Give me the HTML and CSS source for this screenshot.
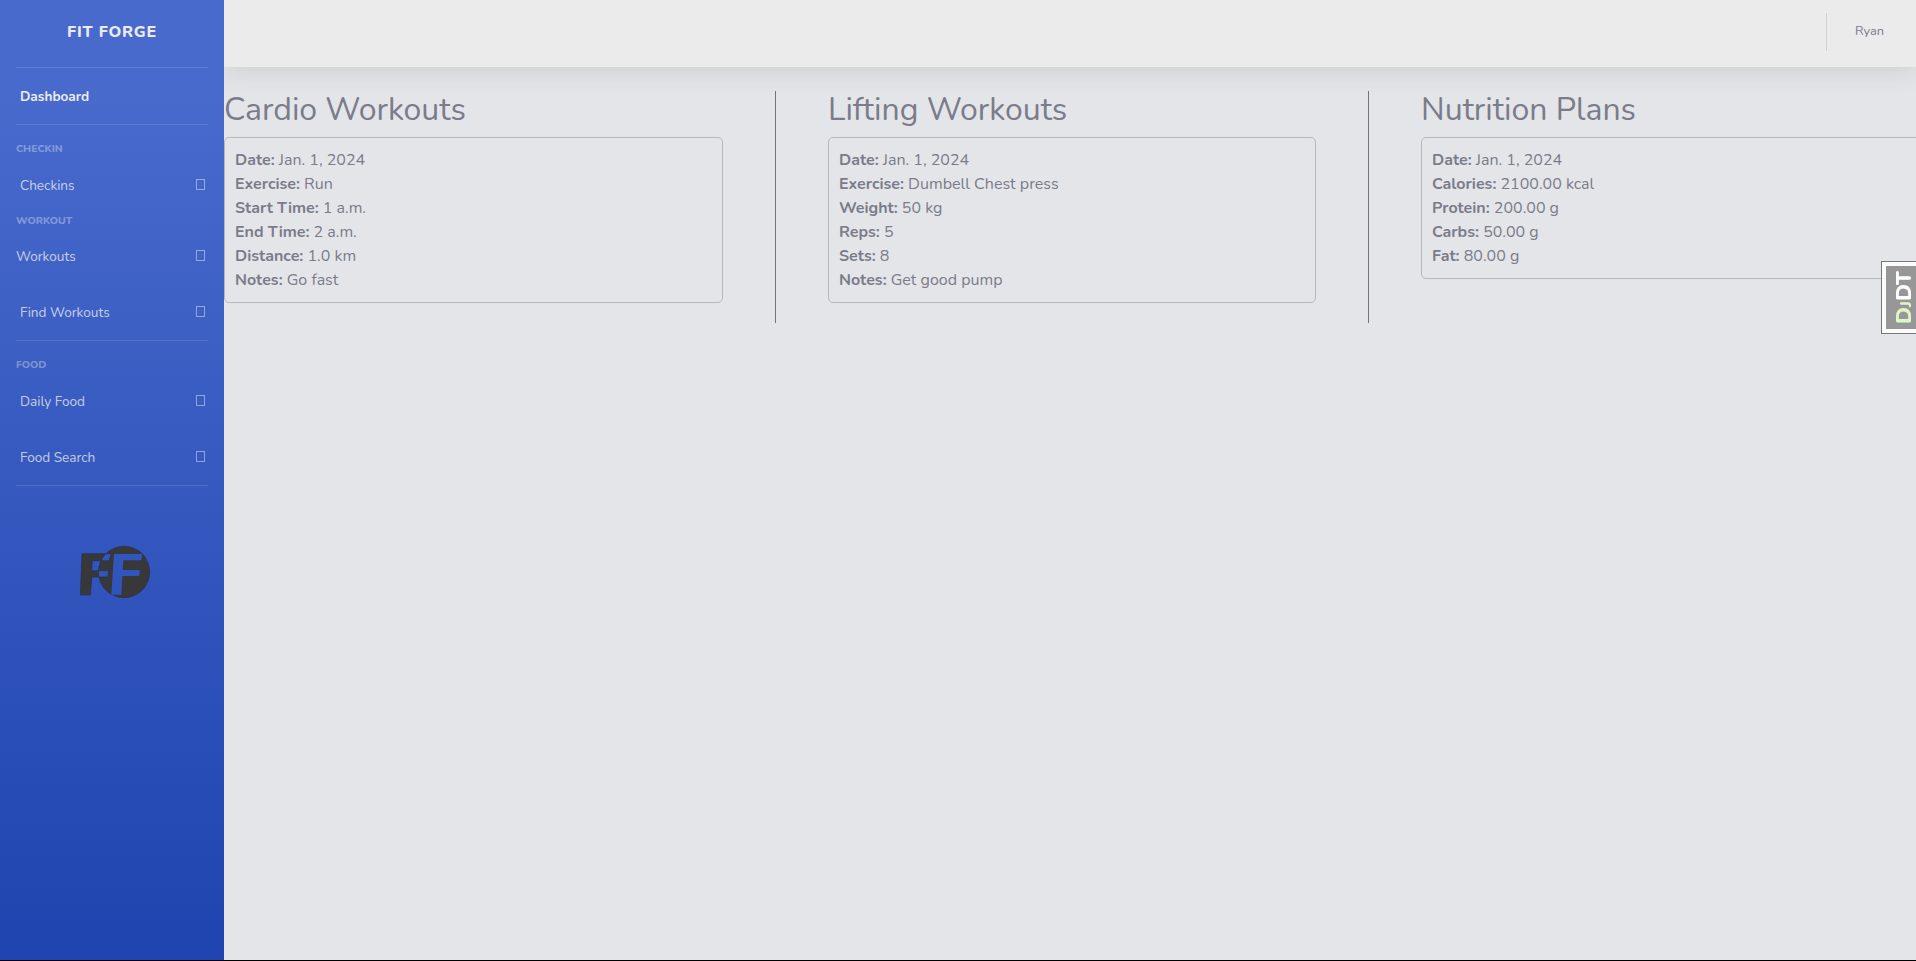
FILE: index.html
```html
<!DOCTYPE html>
<html lang="en">
<head>
<meta charset="utf-8">
<title>Fit Forge</title>
<link rel="stylesheet" href="styles.css">
</head>
<body>
<div class="page">
  <nav class="sidebar">
    <a class="brand">FIT FORGE</a>
    <hr>
    <a class="item active"><span>Dashboard</span></a>
    <hr>
    <div class="group g-checkin">CHECKIN</div>
    <a class="item i-checkins"><span>Checkins</span><i class="box"></i></a>
    <div class="group g-workout">WORKOUT</div>
    <a class="item i-workouts"><span>Workouts</span><i class="box"></i></a>
    <a class="item i-find"><span>Find Workouts</span><i class="box"></i></a>
    <hr>
    <div class="group g-food">FOOD</div>
    <a class="item i-daily"><span>Daily Food</span><i class="box"></i></a>
    <a class="item i-search"><span>Food Search</span><i class="box"></i></a>
    <hr>
    <svg class="logo" viewBox="0 0 330 240" width="110" height="80">
      <defs>
        <mask id="cut">
          <rect width="330" height="240" fill="#fff"/>
          <path d="M162 72H246L244 91H190L188 120H239L238 138H187L184 194H154Z" fill="#000"/>
        </mask>
      </defs>
      <path mask="url(#cut)" fill="#38383a" stroke="#29304a" stroke-width="2" fill-rule="evenodd" d="M66 71H153L148 92H97L95 122H146L144 141H96L91 195H61ZM192 49A77 77 0 1 1 192 203A77 77 0 1 1 192 49Z"/>
    </svg>
  </nav>
  <div class="content">
    <header class="topbar"><span class="sep"></span><span class="user">Ryan</span></header>
    <main class="columns">
      <section class="col">
        <h1>Cardio Workouts</h1>
        <div class="card">
          <p><b>Date:</b> Jan. 1, 2024</p>
          <p><b>Exercise:</b> Run</p>
          <p><b>Start Time:</b> 1 a.m.</p>
          <p><b>End Time:</b> 2 a.m.</p>
          <p><b>Distance:</b> 1.0 km</p>
          <p><b>Notes:</b> Go fast</p>
        </div>
      </section>
      <section class="col">
        <h1>Lifting Workouts</h1>
        <div class="card">
          <p><b>Date:</b> Jan. 1, 2024</p>
          <p><b>Exercise:</b> Dumbell Chest press</p>
          <p><b>Weight:</b> 50 kg</p>
          <p><b>Reps:</b> 5</p>
          <p><b>Sets:</b> 8</p>
          <p><b>Notes:</b> Get good pump</p>
        </div>
      </section>
      <section class="col">
        <h1>Nutrition Plans</h1>
        <div class="card">
          <p><b>Date:</b> Jan. 1, 2024</p>
          <p><b>Calories:</b> 2100.00 kcal</p>
          <p><b>Protein:</b> 200.00 g</p>
          <p><b>Carbs:</b> 50.00 g</p>
          <p><b>Fat:</b> 80.00 g</p>
        </div>
      </section>
    </main>
  </div>
</div>
<div class="djdt"><div class="djdt-in"><span class="djdt-text"><span class="dj">D<small>J</small></span>DT</span></div></div>
</body>
</html>
```
FILE: styles.css
```css
* { box-sizing: border-box; }
body {
  margin: 0;
  height: 961px;
  overflow: hidden;
  background: #000;
  color: #7a7c8a;
  font: 400 16px/24px Nunito, Lato, "Open Sans", sans-serif;
}
.page { display: flex; height: 960px; background: #e4e5e8; overflow: hidden; }

/* Sidebar */
.sidebar {
  width: 224px;
  flex: none;
  display: flex;
  flex-direction: column;
  position: relative;
  z-index: 1;
  background: linear-gradient(180deg, #486acd 10%, #1f44af 100%);
}
.sidebar hr {
  width: 192px;
  height: 1px;
  margin: 0 16px;
  border: 0;
  flex: none;
  background: rgba(235, 235, 235, .15);
}
.brand {
  height: 67px;
  padding-top: 20px;
  text-align: center;
  font-weight: 800;
  letter-spacing: .8px;
  color: #ebebeb;
}
.item {
  display: flex;
  justify-content: space-between;
  align-items: flex-start;
  height: 20px;
  padding: 0 19px 0 20px;
  font-size: 13.6px;
  line-height: 20px;
  color: rgba(235, 235, 235, .8);
}
.item.active { color: #ebebeb; font-weight: 700; margin: 19px 0 17px; }
.box { width: 9px; height: 11px; margin-top: 3px; border: 1px solid rgba(235, 235, 235, .5); }
.group {
  height: 14px;
  padding-left: 16px;
  font-size: 10.4px;
  line-height: 14px;
  font-weight: 800;
  color: rgba(235, 235, 235, .4);
}
.g-checkin, .g-food { margin-top: 17px; }
.i-checkins { margin-top: 20px; }
.g-workout { margin-top: 18px; }
.i-workouts { margin-top: 19px; padding-left: 16px; }
.i-find { margin: 36px 0 17px; }
.i-daily { margin-top: 20px; }
.i-search { margin: 36px 0 17px; }
.logo { margin: 44px 0 0 60px; flex: none; }

/* Main area */
.content { flex: 1; min-width: 0; }
.topbar {
  display: flex;
  justify-content: flex-end;
  height: 67px;
  padding-right: 30px;
  background: #ebebeb;
  box-shadow: 0 2px 28px rgba(58, 59, 69, .15);
}
.sep { width: 1px; height: 38px; margin: 13px 28px 0 0; background: #d1d2d9; }
.user { width: 31px; padding-top: 19px; font-size: 12.8px; white-space: nowrap; }
.columns {
  display: grid;
  grid-template-columns: 552px 593px 604px;
  margin-top: 24px;
}
.col { height: 232px; padding: 0 52px; border-right: 1px solid #757575; }
.col:first-child { padding-left: 0; }
.col:last-child { border-right: 0; }
h1 { margin: 0 0 8px; font-size: 32px; line-height: 38px; font-weight: 400; white-space: nowrap; }
.card { padding: 10px; border: 1px solid #b8b8b8; border-radius: 5px; }
.card p { margin: 0; white-space: nowrap; }
b { font-weight: 700; }

/* Debug toolbar handle */
.djdt {
  position: absolute;
  left: 1881px;
  top: 261px;
  width: 35px;
  height: 73px;
  border: 1px solid #777;
  border-right: 0;
  padding: 4px 0 4px 4px;
  background: rgba(255, 255, 255, .85);
}
.djdt-in {
  height: 63px;
  display: flex;
  justify-content: flex-end;
  align-items: center;
  background: #979797;
}
.djdt-text {
  writing-mode: vertical-rl;
  text-orientation: sideways;
  transform: rotate(180deg);
  font: 800 22px/24px Nunito, "Open Sans", sans-serif;
  color: #fff;
  white-space: nowrap;
}
.dj { color: #dff5c8; }
.dj small { font-size: 16px; line-height: 1; }
```
